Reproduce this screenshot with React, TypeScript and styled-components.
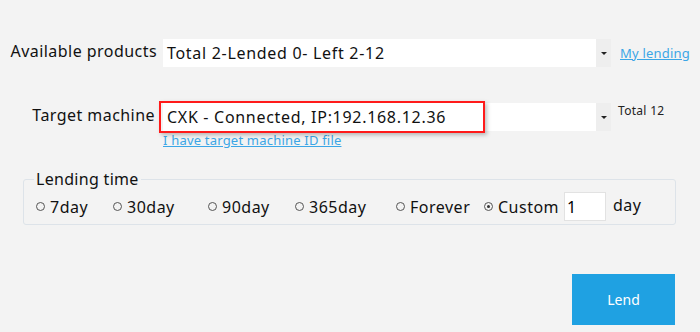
import React, { useState } from "react";
import styled, { createGlobalStyle } from "styled-components";

const GlobalStyle = createGlobalStyle`
  html, body {
    margin: 0;
    padding: 0;
    background: #f3f3f3;
    font-family: "Noto Sans", "Open Sans", sans-serif;
    color: #111;
  }
`;

const Page = styled.div`
  width: 700px;
  height: 332px;
  box-sizing: border-box;
  padding-top: 39px;
  display: flex;
  flex-direction: column;
`;

const Row = styled.div<{ $mt?: number }>`
  display: flex;
  align-items: flex-start;
  margin-top: ${(p) => p.$mt ?? 0}px;
`;

const Label = styled.div`
  width: 158px;
  padding-right: 1px;
  box-sizing: border-box;
  text-align: right;
  font-size: 16px;
  letter-spacing: 0.45px;
  line-height: 20px;
  white-space: nowrap;
  flex-shrink: 0;
`;

const FieldCol = styled.div`
  display: flex;
  flex-direction: column;
`;

const Select = styled.div`
  position: relative;
  width: 448px;
  height: 28px;
  background: #fff;
  display: flex;
  align-items: center;
  margin-left: 5px;
`;

const SelectText = styled.div`
  flex: 1;
  padding-left: 4px;
  font-size: 16px;
  letter-spacing: 0.7px;
  white-space: nowrap;
`;

const Arrow = styled.div`
  width: 15px;
  height: 100%;
  background: #eeeeee;
  display: flex;
  align-items: center;
  justify-content: center;
  &::after {
    content: "";
    border-left: 3px solid transparent;
    border-right: 3px solid transparent;
    border-top: 3px solid #222;
  }
`;

const Highlight = styled.div`
  position: absolute;
  left: -4px;
  top: -2px;
  width: 326px;
  height: 32px;
  box-sizing: border-box;
  border: 2px solid #ff1a1a;
  box-shadow: 2px 2px 4px rgba(0, 0, 0, 0.25);
  pointer-events: none;
`;

const Link = styled.a<{ $mt?: number; $ml?: number }>`
  color: #3ba6e6;
  text-decoration: underline;
  font-size: 13px;
  letter-spacing: 0.2px;
  margin-top: ${(p) => p.$mt ?? 0}px;
  margin-left: ${(p) => p.$ml ?? 0}px;
  white-space: nowrap;
  cursor: pointer;
`;

const Note = styled.div`
  font-size: 12px;
  letter-spacing: 0.3px;
  color: #222;
  margin-left: 7px;
  margin-top: 1px;
`;

const Fieldset = styled.fieldset`
  margin: 21px 0 0 23px;
  width: 653px;
  height: 55px;
  box-sizing: border-box;
  border: 1px solid #dde3e9;
  border-radius: 3px;
  padding: 0 0 0 10px;
  display: flex;
  align-items: center;
`;

const Legend = styled.legend`
  font-size: 16px;
  letter-spacing: 0.3px;
  padding: 0 2px;
  margin-left: 0;
  line-height: 18px;
`;

const Options = styled.div`
  display: flex;
  align-items: center;
  margin-top: 4px;
  margin-left: 2px;
`;

const Option = styled.label<{ $w: number }>`
  display: flex;
  align-items: center;
  width: ${(p) => p.$w}px;
  font-size: 16px;
  letter-spacing: 0.5px;
  white-space: nowrap;
  cursor: pointer;
`;

const Dot = styled.span<{ $on: boolean }>`
  width: 7px;
  height: 7px;
  border: 1px solid #555;
  border-radius: 50%;
  margin-right: 5px;
  display: flex;
  align-items: center;
  justify-content: center;
  &::after {
    content: "";
    width: 3px;
    height: 3px;
    border-radius: 50%;
    background: ${(p) => (p.$on ? "#333" : "transparent")};
  }
`;

const DayInput = styled.input`
  width: 42px;
  height: 29px;
  box-sizing: border-box;
  border: 1px solid #e2e2e2;
  font-family: inherit;
  font-size: 16px;
  padding: 0 2px;
  outline: none;
`;

const Unit = styled.span`
  font-size: 16px;
  letter-spacing: 0.5px;
  margin-left: 7px;
  margin-top: -4px;
`;

const Footer = styled.div`
  display: flex;
  justify-content: flex-end;
  padding-right: 25px;
  margin-top: 49px;
`;

const LendButton = styled.button`
  width: 103px;
  height: 51px;
  border: none;
  background: #1fa1e2;
  color: #fff;
  font-family: inherit;
  font-size: 14px;
  cursor: pointer;
`;

const periods = [
  { key: "7", text: "7day", w: 77 },
  { key: "30", text: "30day", w: 95 },
  { key: "90", text: "90day", w: 87 },
  { key: "365", text: "365day", w: 101 },
  { key: "forever", text: "Forever", w: 88 },
];

export default function App() {
  const [period, setPeriod] = useState("custom");
  const [days, setDays] = useState("1");

  return (
    <>
      <GlobalStyle />
      <Page>
        <Row>
          <Label style={{ paddingTop: 2 }}>Available products</Label>
          <Select>
            <SelectText>Total 2-Lended 0- Left 2-12</SelectText>
            <Arrow />
          </Select>
          <Link $mt={5} $ml={9}>My lending</Link>
        </Row>

        <Row $mt={34}>
          <Label style={{ paddingTop: 4, paddingRight: 3 }}>Target machine</Label>
          <FieldCol>
            <Select style={{ marginTop: 2 }}>
              <Highlight />
              <SelectText>CXK - Connected, IP:192.168.12.36</SelectText>
              <Arrow />
            </Select>
            <Link $mt={0} $ml={5}>I have target machine ID file</Link>
          </FieldCol>
          <Note>Total 12</Note>
        </Row>

        <Fieldset>
          <Legend>Lending time</Legend>
          <Options>
            {periods.map((p) => (
              <Option key={p.key} $w={p.w} onClick={() => setPeriod(p.key)}>
                <Dot $on={period === p.key} />
                {p.text}
              </Option>
            ))}
            <Option $w={80} onClick={() => setPeriod("custom")}>
              <Dot $on={period === "custom"} />
              Custom
            </Option>
            <DayInput value={days} onChange={(e) => setDays(e.target.value)} />
            <Unit>day</Unit>
          </Options>
        </Fieldset>

        <Footer>
          <LendButton>Lend</LendButton>
        </Footer>
      </Page>
    </>
  );
}
